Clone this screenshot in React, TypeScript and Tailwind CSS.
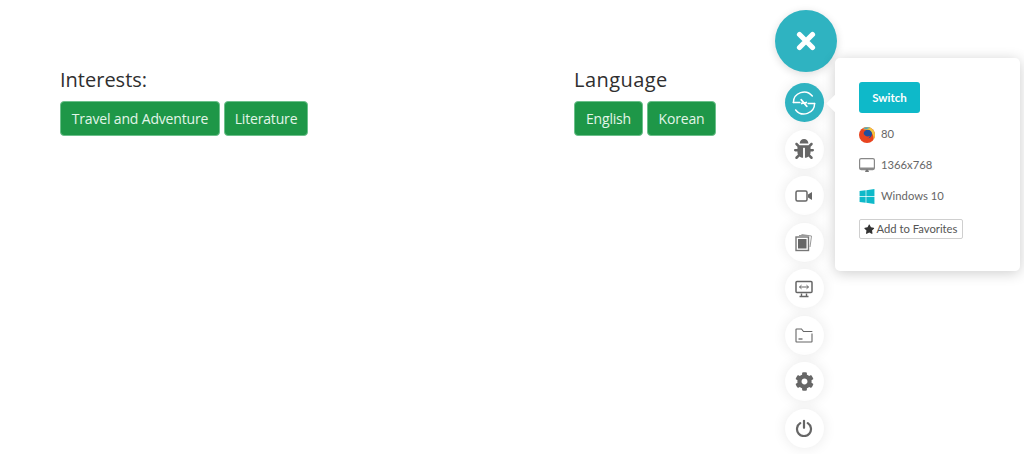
import type { ReactNode } from 'react';
import { FaBug, FaCog, FaStar, FaWindows } from 'react-icons/fa';

const Tag = ({ label, className }: { label: string; className: string }) => (
  <span
    className={`flex h-[35px] items-center justify-center rounded-[4px] border border-[#6cc08b] bg-[#1e9748] text-[14px] tracking-[-0.17px] text-[#e3f5e9] ${className}`}
  >
    {label}
  </span>
);

const Heading = ({ children, className = '' }: { children: ReactNode; className?: string }) => (
  <h2 className={`mb-[9px] h-[24px] text-[20px] leading-[24px] text-[#2f2f2f] ${className}`}>{children}</h2>
);

const CloseIcon = () => (
  <svg width="20" height="20" viewBox="0 0 20 20" fill="none" stroke="#fff" strokeWidth="5.200" strokeLinecap="round">
    <path d="M3.500 3.500l13 13M16.500 3.500l-13 13" />
  </svg>
);

const SwitchIcon = () => (
  <svg width="24" height="24" viewBox="0 0 26 26" fill="none" stroke="#fff" strokeWidth="1.600" strokeLinecap="round">
    <path d="M1.500 12.500a11.500 11.500 0 0 1 20.500-7" />
    <path d="M24.500 13.500a11.500 11.500 0 0 1-20.500 7" />
    <path d="M1.500 12.500h7M24.500 13.500h-7" />
    <path d="M10 9.500l3 3.500-2.500 .5M16 16.500l-3-3.500 2.500-.5" strokeWidth="2" />
  </svg>
);

const VideoIcon = () => (
  <svg width="18" height="14" viewBox="0 0 18 14" fill="none">
    <rect x="1" y="2" width="11" height="10" rx="1.500" stroke="#666" strokeWidth="1.500" />
    <path d="M13 5.500L17 3v8l-4-2.500z" fill="#666" />
  </svg>
);

const GalleryIcon = () => (
  <svg width="18" height="19" viewBox="0 0 18 19" fill="none">
    <path d="M6.500 1.500l10 1.500-1.500 11" stroke="#999" strokeWidth="1" />
    <path d="M4 2.500h10" stroke="#999" strokeWidth="1" />
    <rect x="1" y="4" width="12.500" height="13.500" stroke="#777" strokeWidth="1.400" />
    <rect x="3" y="6" width="8.500" height="9.500" fill="#666" />
  </svg>
);

const RemoteIcon = () => (
  <svg width="18" height="18" viewBox="0 0 18 18" fill="none">
    <rect x="1" y="1.500" width="16" height="11" rx="1" stroke="#666" strokeWidth="1.500" />
    <path d="M4.500 7h9M4.500 7l2-1.800M4.500 7l2 1.800M13.500 7l-2-1.800M13.500 7l-2 1.800" stroke="#666" strokeWidth="1" />
    <path d="M6.500 13.500v2.500M11.500 13.500v2.500M4.500 16.500h9" stroke="#666" strokeWidth="1.400" />
  </svg>
);

const FolderIcon = () => (
  <svg width="18" height="15" viewBox="0 0 18 15" fill="none" stroke="#666" strokeWidth="1.100">
    <path d="M17 5.500V13.500a.5.500 0 0 1-.5.500H1.500a.5.500 0 0 1-.5-.5V1.500a.5.500 0 0 1 .5-.5h5l2 2.500h8a.5.500 0 0 1 .5.500" />
    <path d="M3.500 11h4" strokeWidth="1.300" />
  </svg>
);

const PowerIcon = () => (
  <svg width="18" height="18" viewBox="0 0 18 18" fill="none" stroke="#666" strokeWidth="2.200" strokeLinecap="round">
    <path d="M5.200 4.200a7 7 0 1 0 7.600 0" />
    <path d="M9 1.800v7" />
  </svg>
);

const FirefoxIcon = () => (
  <svg width="16" height="16" viewBox="0 0 16 16">
    <circle cx="8" cy="8" r="8" fill="#e8441f" />
    <path d="M8 0a8 8 0 0 1 8 8c0 1.800-.6 3.500-1.600 4.800C15 9 13 4 8.500 3 6.500 2.500 5 3 4 2 5 .8 6.500 0 8 0z" fill="#f3c63f" />
    <path d="M4.500 1.500C6 .3 9-.1 11.500 1c-2 .2-3.500 .7-4 1.500z" fill="#4aa8c4" />
    <circle cx="8.800" cy="7" r="4.200" fill="#1f4f9c" />
    <path d="M4.500 6c.8 3 3.500 4 6.500 3-1 2.500-3.500 3.500-5.500 2.500C4 10.500 3.800 8 4.500 6z" fill="#e8441f" />
  </svg>
);

const MonitorIcon = () => (
  <svg width="16" height="15" viewBox="0 0 16 15" fill="none">
    <rect x=".6" y=".6" width="14.800" height="11" rx="1.500" fill="#fff" stroke="#888" strokeWidth="1.200" />
    <path d="M.6 9.500h14.800v.7a1.400 1.400 0 0 1-1.400 1.400H2a1.400 1.400 0 0 1-1.400-1.400z" fill="#8a8a8a" />
    <path d="M6 14h4l-1-2.500H7z" fill="#777" />
  </svg>
);

const RailButton = ({ children, active }: { children: ReactNode; active?: boolean }) => (
  <div
    className={`flex h-[39px] w-[39px] items-center justify-center rounded-full shadow-[0_0_14px_rgba(0,0,0,0.09)] ${
      active ? 'bg-[#2fb3c1]' : 'bg-white'
    }`}
  >
    {children}
  </div>
);

const InfoRow = ({ icon, label }: { icon: ReactNode; label: string }) => (
  <div className="flex h-[17px] items-center gap-[6px] text-[11.250px] text-[#666]">
    <span className="flex w-[16px] items-center justify-center">{icon}</span>
    {label}
  </div>
);

export default function App() {
  return (
    <div className="relative h-[454px] w-[1024px] overflow-hidden bg-white font-['Open_Sans',sans-serif]">
      <div className="flex pl-[60px] pt-[68px]">
        <div className="w-[514px]">
          <Heading>Interests:</Heading>
          <div className="flex gap-[4px]">
            <Tag label="Travel and Adventure" className="w-[160px]" />
            <Tag label="Literature" className="w-[84px]" />
          </div>
        </div>
        <div>
          <Heading className="tracking-[0.45px]">Language</Heading>
          <div className="flex gap-[4px]">
            <Tag label="English" className="w-[69px]" />
            <Tag label="Korean" className="w-[69px]" />
          </div>
        </div>
      </div>

      <div className="absolute left-[775px] top-[10px] flex w-[62px] flex-col items-center font-['Lato',sans-serif]">
        <div className="flex h-[62px] w-[62px] items-center justify-center rounded-full bg-[#2fb3c1] shadow-[0_2px_8px_rgba(0,0,0,0.14)]">
          <CloseIcon />
        </div>
        <div className="mt-[11px] flex -translate-x-[2px] flex-col gap-[7.500px]">
          <RailButton active>
            <SwitchIcon />
          </RailButton>
          <RailButton>
            <FaBug className="text-[20px] text-[#666]" />
          </RailButton>
          <RailButton>
            <VideoIcon />
          </RailButton>
          <RailButton>
            <GalleryIcon />
          </RailButton>
          <RailButton>
            <RemoteIcon />
          </RailButton>
          <RailButton>
            <FolderIcon />
          </RailButton>
          <RailButton>
            <FaCog className="text-[19px] text-[#666]" />
          </RailButton>
          <RailButton>
            <PowerIcon />
          </RailButton>
        </div>
      </div>

      <div className="absolute left-[835px] top-[58px] h-[213px] w-[185px] rounded-[5px] bg-white pl-[24px] pt-[24px] font-['Lato',sans-serif] shadow-[0_2px_14px_rgba(0,0,0,0.2)]">
        <div className="absolute left-[-6.500px] top-[39px] h-[13px] w-[13px] rotate-45 bg-white" />
        <div className="relative flex h-[31px] w-[61px] items-center justify-center rounded-[3px] bg-[#0eb9c9] text-[11.500px] font-bold text-white">
          Switch
        </div>
        <div className="mt-[13px] flex flex-col gap-[14px]">
          <InfoRow icon={<FirefoxIcon />} label="80" />
          <InfoRow icon={<MonitorIcon />} label="1366x768" />
          <InfoRow icon={<FaWindows className="text-[17px] text-[#0eb9c9]" />} label="Windows 10" />
        </div>
        <div className="mt-[14px] flex h-[20px] w-[104px] items-center gap-[2px] whitespace-nowrap rounded-[2px] border border-[#cfcfcf] pl-[4px] text-[11.250px] text-[#555]">
          <FaStar className="text-[10.500px] text-[#333]" />
          Add to Favorites
        </div>
      </div>
    </div>
  );
}
